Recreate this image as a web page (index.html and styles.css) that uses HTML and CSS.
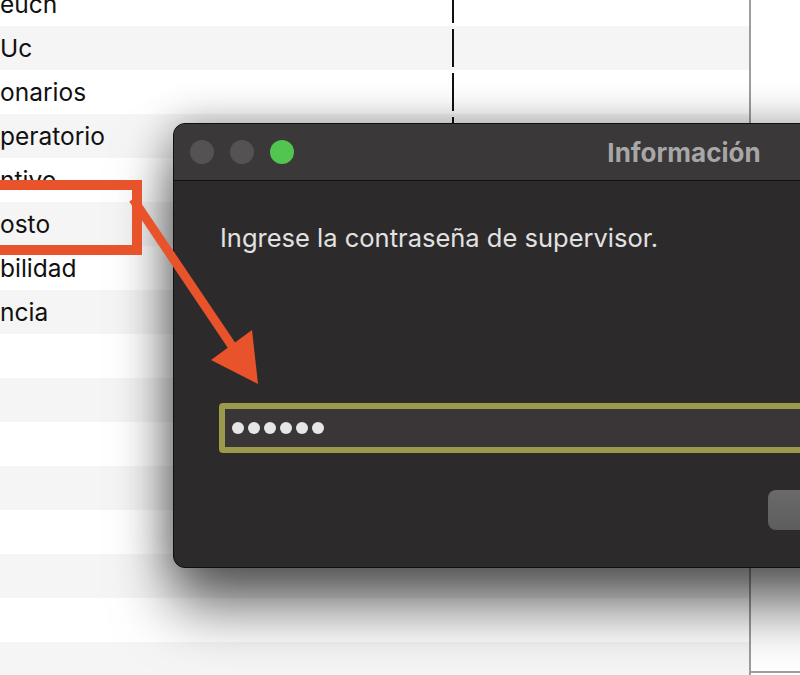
FILE: index.html
```html
<!DOCTYPE html>
<html>
  <head>
    <title>Información</title>
    <link rel="stylesheet" href="styles.css">
  </head>
  <body>
    <div class="screen">
      <div class="list">
        <div class="row"><div class="cell-name">euch</div><div class="col-mark"></div></div>
        <div class="row"><div class="cell-name">Uc</div><div class="col-mark"></div></div>
        <div class="row"><div class="cell-name">onarios</div><div class="col-mark"></div></div>
        <div class="row"><div class="cell-name">peratorio</div><div class="col-mark"></div></div>
        <div class="row"><div class="cell-name">ntivo</div></div>
        <div class="row"><div class="cell-name">osto</div></div>
        <div class="row"><div class="cell-name">bilidad</div></div>
        <div class="row"><div class="cell-name">ncia</div></div>
        <div class="row"></div>
        <div class="row"></div>
        <div class="row"></div>
        <div class="row"></div>
        <div class="row"></div>
        <div class="row"></div>
        <div class="row"></div>
        <div class="row"></div>
      </div>
      <div class="divider"></div>
      <div class="side">
        <div class="side-fill"></div>
        <div class="side-foot"></div>
      </div>
    </div>

    <div class="dialog">
      <div class="titlebar">
        <div class="lights">
          <span class="light"></span>
          <span class="light"></span>
          <span class="light light-green"></span>
        </div>
        <div class="title">Información</div>
        <div></div>
      </div>
      <div class="dialog-body">
        <p class="message">Ingrese la contraseña de supervisor.</p>
        <div class="password-field">
          <span class="dot"></span><span class="dot"></span><span class="dot"></span>
          <span class="dot"></span><span class="dot"></span><span class="dot"></span>
        </div>
        <div class="actions">
          <button type="button" class="btn" aria-label="Cancelar"></button>
          <button type="button" class="btn" aria-label="Aceptar"></button>
        </div>
      </div>
    </div>

    <!-- annotation drawn over the screenshot -->
    <svg class="annotation" width="800" height="675" viewBox="0 0 800 675">
      <rect x="-20" y="185" width="157" height="65" fill="none" stroke="#e8532b" stroke-width="10"/>
      <line x1="133" y1="199" x2="232" y2="346" stroke="#e8532b" stroke-width="9"/>
      <polygon points="258,384 211,360 252,330" fill="#e8532b"/>
    </svg>
  </body>
</html>
```

FILE: styles.css
```css
body {
  margin: 0;
  width: 800px;
  height: 675px;
  overflow: hidden;
  background: #fff;
  font-family: Inter, "Open Sans", sans-serif;
  color: #111;
}
.screen {
  display: flex;
  height: 675px;
}
.list {
  width: 749px;
  margin-top: -18px;
  display: flex;
  flex-direction: column;
}
.row {
  flex: none;
  height: 44px;
  display: flex;
  align-items: center;
  background: #fff;
}
.row:nth-child(even) {
  background: #f5f5f5;
}
.cell-name {
  width: 452px;
  font-size: 24.5px;
  line-height: 44px;
  white-space: nowrap;
  overflow: hidden;
}
.col-mark {
  width: 2px;
  height: 38px;
  background: #111;
}
.divider {
  width: 2px;
  background: #9d9d9d;
}
.side {
  flex: 1;
  display: flex;
  flex-direction: column;
  background: #fff;
}
.side-fill {
  flex: 1;
}
.side-foot {
  height: 2px;
  border-top: 2px solid #9d9d9d;
}

.dialog {
  position: absolute;
  left: 173px;
  top: 123px;
  width: 1020px;
  height: 443px;
  background: #2c2a2b;
  border: 1px solid #0f0f0f;
  border-radius: 12px;
  overflow: hidden;
  box-shadow: 0 38px 60px rgba(0, 0, 0, 0.6), 0 0 40px rgba(0, 0, 0, 0.3);
}
.titlebar {
  height: 56px;
  background: #3a3839;
  border-bottom: 1px solid #111;
  display: grid;
  grid-template-columns: 1fr auto 1fr;
  align-items: center;
}
.lights {
  display: flex;
  gap: 16px;
  padding-left: 16px;
}
.light {
  width: 24px;
  height: 24px;
  border-radius: 50%;
  background: #545253;
}
.light-green {
  background: #50c650;
}
.title {
  font-size: 26px;
  font-weight: 700;
  color: #a7a7a7;
}
.dialog-body {
  padding: 42px 0 0 45px;
}
.message {
  margin: 0 0 0 1px;
  font-size: 25.5px;
  line-height: 30px;
  color: #e2e2e2;
}
.password-field {
  margin-top: 150px;
  width: 916px;
  height: 38px;
  border: 6px solid #9b9a4b;
  border-radius: 4px;
  background: #3a3637;
  display: flex;
  align-items: center;
  gap: 4px;
  padding-left: 7px;
}
.dot {
  width: 12px;
  height: 12px;
  border-radius: 50%;
  background: #e6e6e6;
}
.actions {
  display: flex;
  gap: 16px;
  margin-top: 37px;
  padding-left: 549px;
}
.btn {
  width: 130px;
  height: 40px;
  border: none;
  border-radius: 8px;
  background: linear-gradient(#6a6a6a, #5d5d5d);
}
.annotation {
  position: absolute;
  left: 0;
  top: 0;
  pointer-events: none;
}
```
